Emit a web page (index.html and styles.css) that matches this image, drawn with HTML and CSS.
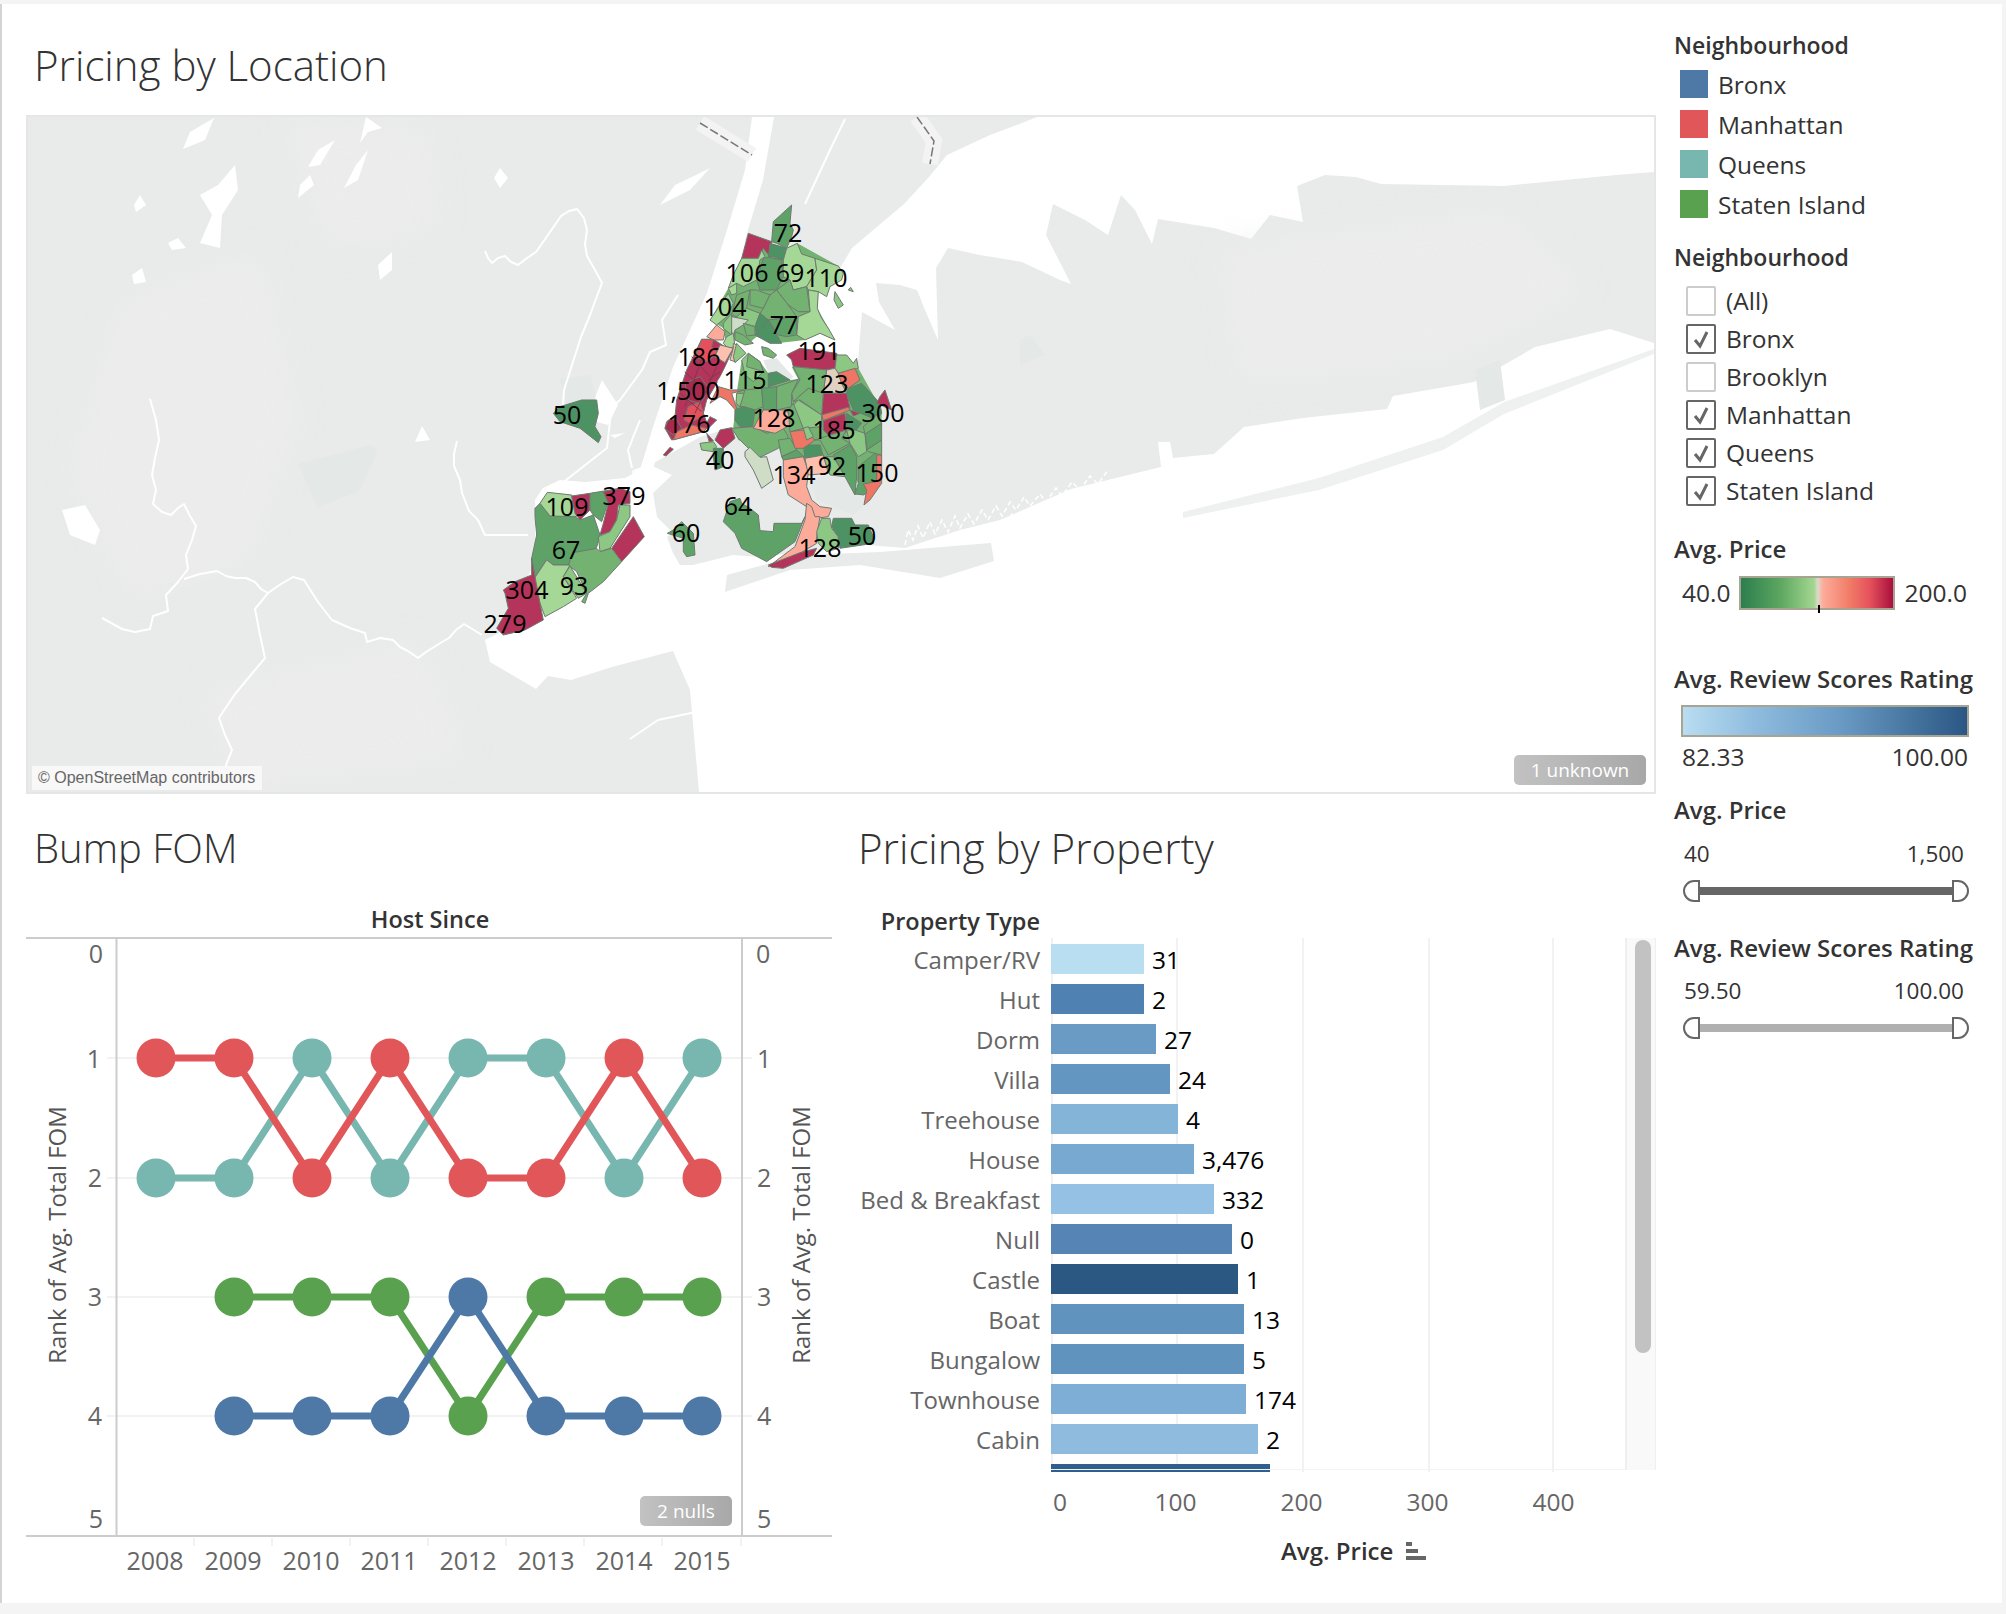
FILE: index.html
```html
<!DOCTYPE html>
<html lang="en">
<head>
<meta charset="utf-8">
<title>Pricing dashboard</title>
<link rel="stylesheet" href="styles.css">
</head>
<body>
<div class="dash">
  <main class="main">
    <h1 class="title title-top">Pricing by Location</h1>
    <section class="map">
      <svg class="map-svg" viewBox="28 117 1626 675" width="1626" height="675">
        <g class="land">
          <polygon points="28,117 752,117 745,170 727,230 707,293 673,367 653,427 640,470 625,478 585,482 560,480 543,488 535,500 535,560 505,630 485,640 490,662 536,689 548,676 571,680 612,667 673,651 690,690 699,792 28,792"/>
          <polygon points="774,117 1037,117 1022,123 990,135 947,155 929,177 904,204 852,248 827,290 780,300 745,240 763,180"/>
          <polygon points="858,362 862,312 895,330 879,302 876,283 900,285 917,290 925,310 938,340 936,268 948,248 980,255 1022,262 1060,280 1071,284 1046,235 1053,204 1085,220 1108,235 1121,195 1135,210 1152,244 1158,219 1214,228 1251,239 1270,215 1303,222 1297,186 1325,175 1356,177 1381,184 1504,186 1616,175 1654,172 1654,343 1610,329 1535,347 1474,382 1393,396 1387,409 1303,418 1244,427 1214,454 1173,458 1170,442 1158,442 1161,467 1071,489 1000,520 960,530 905,548 867,545 820,550 760,557 733,555 693,565 680,565 673,553 667,537 673,533 657,517 653,493 672,475 650,465 700,437 733,427 736,410 742,387 763,380 790,380 800,378 793,367 837,360"/>
          <polygon points="725,592 727,575 800,555 880,552 991,543 994,561 940,578 860,565 790,570"/>
        </g>
        <g class="tone">
          <polygon points="120,300 260,250 300,420 250,560 130,600 70,470"/>
          <polygon points="280,120 430,130 440,230 330,250"/>
          <polygon points="200,690 420,640 470,760 240,788"/>
          <polygon points="1220,250 1500,210 1590,290 1450,360 1240,385"/>
        </g>
        <polygon class="barrier" points="1183,512 1319,478 1443,437 1504,402 1654,349 1654,354 1504,414 1443,450 1319,490 1183,518"/>
        <g class="park">
          <polygon points="298,464 370,445 378,450 360,490 318,508"/>
          <polygon points="1020,340 1030,335 1045,355 1020,365"/>
          <polygon points="1475,370 1500,360 1505,400 1480,410"/>
          <polygon points="560,380 590,375 600,410 570,420"/>
          <polygon points="610,540 650,535 700,590 690,600 650,575 625,580" transform="translate(560 180) scale(.3333)"/>
          <polygon points="450,360 480,350 555,350 585,405 612,410 610,435 580,465 520,440 470,420" transform="translate(660 360) scale(.3333)"/>
        </g>
        <g class="river">
          <polyline points="485,251 488,258 492,263 498,258 505,256 511,262 518,265 527,258 536,252 548,235 561,216 569,211 577,209 584,218 587,230 585,244 587,256 595,270 602,283 597,296 590,315 581,337 572,365 564,390 563,405"/>
          <polyline points="150,399 156,420 159,440 155,458 152,475 156,490 153,504 162,512 171,515 178,508 184,504 190,516 196,526 192,540 186,555 188,569 178,582 166,595 168,611 153,616 150,629 135,632 122,629 102,618"/>
          <polyline points="184,579 200,574 217,571 226,576 235,578 246,578 255,582 261,589 268,593 281,584 293,577 304,580 318,602 332,620 350,628 365,633 367,642 380,638 393,640 400,647 408,651 418,658 426,652 434,647 442,642 449,638 456,630 464,624 482,635"/>
          <polyline points="268,593 255,609 260,635 265,658 250,676 235,694 219,718 225,735 232,750 224,770"/>
          <polyline points="457,441 454,454 454,466 460,480 462,493 469,511 478,520 485,535 505,535 528,535"/>
          <polyline points="630,739 658,720 696,712"/>
          <polyline points="845,119 830,150 805,204"/>
          <polyline points="678,295 662,320 666,345 650,352 642,370 620,400 607,412"/>
          <polyline points="612,403 607,448 561,484"/>
          <polyline points="640,420 628,450 632,468"/>
        </g>
        <g class="river-thin">
          <polyline points="700,123 752,155"/>
          <polyline points="917,117 934,141 930,164"/>
        </g>
        <g class="border-line">
          <polyline points="700,123 752,155"/>
          <polyline points="917,117 934,141 930,164"/>
        </g>
        <g class="lake">
          <polygon points="214,118 205,140 183,149 190,132"/>
          <polygon points="335,140 320,165 308,167 318,150"/>
          <polygon points="366,117 382,128 368,132 360,143"/>
          <polygon points="368,150 358,180 344,188 356,165"/>
          <polygon points="235,165 238,190 222,215 220,248 200,243 212,215 200,195 218,185"/>
          <polygon points="310,175 300,185 298,198 314,185"/>
          <polygon points="140,195 146,205 136,212 134,205"/>
          <polygon points="178,238 186,248 172,250 168,243"/>
          <polygon points="142,268 146,282 134,284 132,275"/>
          <polygon points="392,252 392,270 380,280 378,265"/>
          <polygon points="500,168 508,178 500,188 494,178"/>
          <polygon points="422,426 430,440 415,442"/>
          <polygon points="62,510 85,505 100,530 95,545 70,535"/>
          <polygon points="696,175 710,168 690,190 660,205 675,185"/>
          <polygon points="596,395 602,380 618,405 608,425 590,420"/>
          <polygon points="610,435 625,433 615,438"/>
          <polygon points="633,470 655,462 648,492 640,478"/>
          <polygon points="645,480 635,495 632,470"/>
        </g>
        <polyline class="marsh" points="905,545 908,530 913,540 918,526 923,538 930,522 935,534 942,520 948,532 955,516 960,528 968,514 974,524 982,510 988,520 996,506 1002,516 1010,502 1016,510 1024,497 1030,506 1040,494 1046,502 1056,488 1062,496 1072,482 1080,490 1090,476 1098,484 1108,470"/>
        <polyline class="marsh" points="1005,524 1012,514 1020,522 1030,510 1038,518 1048,506 1056,512 1068,500 1076,506 1090,494 1100,498 1115,484 1125,488 1140,476 1155,474"/>

        <g class="z" transform="translate(560 180) scale(.3333)">
          <polygon class="bk" points="545,235 630,190 680,205 712,190 835,258 845,300 775,335 772,385 825,480 780,460 735,480 650,490 590,470 560,495 525,480 500,505 490,445 450,420 505,325"/>
          <polygon class="bk" points="545,540 600,545 625,580 690,600 715,598 695,560 800,570 895,565 965,690 965,870 950,890 910,945 885,890 840,880 740,880 670,840 655,800 600,830 560,790 535,780 520,745 525,690 530,640"/>
          <polygon class="f-m2" points="640,125 695,75 690,130 700,150 695,170 680,205 650,190 635,185"/>
          <polygon class="f-cr" points="565,160 635,185 630,230 610,205 595,235 545,235"/>
          <polygon class="f-d" points="630,190 680,205 670,240 640,230 625,232"/>
          <polygon class="f-lg" points="670,240 680,205 712,190 725,222 765,235 770,270 740,320 700,330 690,300 670,290"/>
          <polygon class="f-lg" points="765,235 835,258 850,280 845,300 810,320 800,350 775,335 745,330 740,320 770,270"/>
          <polygon class="f-l2" points="825,335 850,375 835,385 822,360"/>
          <polygon class="f-l2" points="865,330 880,335 872,322"/>
          <polygon class="f-lg" points="775,335 772,385 785,415 805,445 825,480 780,460 735,480 710,465 715,410 750,395 745,330"/>
          <polygon class="f-lg" points="545,235 595,235 605,210 615,230 600,240 590,300 550,320 530,310 505,325 520,285"/>
          <polygon class="f-m2" points="625,232 665,240 670,290 650,330 600,330 590,300 610,235"/>
          <polygon class="f-m" points="650,330 690,300 700,330 740,320 750,395 715,395 685,375 665,350"/>
          <polygon class="f-m" points="590,330 630,345 610,385 570,375 570,330"/>
          <polygon class="f-m" points="610,385 630,345 650,330 665,350 685,375 710,410 625,420 600,400"/>
          <polygon class="f-l2" points="560,385 600,400 585,440 550,430 530,410"/>
          <polygon class="f-d" points="585,465 625,420 665,490 630,490"/>
          <polygon class="f-m2" points="625,420 710,410 710,465 680,470 655,465"/>
          <polygon class="f-d" points="585,440 600,400 625,420 590,462"/>
          <polygon class="f-pg" points="515,410 565,420 550,435 525,450 520,470 510,440"/>
          <polygon class="f-l2" points="490,430 515,400 515,465 490,445"/>
          <polygon class="f-lg" points="450,420 505,340 520,370 500,410 470,435"/>
          <polygon class="f-lg" points="505,325 530,310 530,340 515,345"/>
          <polygon class="f-m" points="530,345 570,330 560,385 530,410 515,405"/>
          <polygon class="f-m" points="525,455 550,465 580,490 555,495 525,480"/>
          <polygon class="f-lg" points="500,470 520,460 525,500 505,505 490,490"/>
          <polygon class="f-m" points="550,430 585,440 585,465 560,468"/>
          <polygon class="f-cr" points="425,478 460,478 495,500 520,505 495,560 470,610 440,660 430,700 445,740 430,755 335,780 315,745 320,725 345,710 350,660 380,570"/>
          <polygon class="f-sa" points="445,465 470,435 495,455 490,480 460,480 440,470"/>
          <polygon class="f-rd" points="425,478 460,478 455,500 475,520 440,545 405,530"/>
          <polygon class="f-pk" points="480,495 520,505 495,548 465,530"/>
          <polygon class="f-dk" points="375,610 420,590 450,630 420,670 385,660"/>
          <polygon class="f-rd" points="385,680 420,665 432,705 390,730 372,720"/>
          <polygon class="f-co" points="350,755 395,735 440,745 430,755 340,780"/>
          <polygon class="f-dk" points="315,745 325,720 350,718 365,745 340,765"/>
          <polyline class="street" points="395,530 450,590"/>
          <polyline class="street" points="375,575 440,640"/>
          <polyline class="street" points="360,640 425,695"/>
          <polyline class="street" points="425,535 375,680"/>
          <polyline class="street" points="470,560 405,700"/>
          <polyline class="street" points="445,600 480,575"/>
          <polygon class="f-pk" points="520,505 520,490 530,495 555,520 525,545 510,540"/>
          <polygon class="f-l2" points="520,530 530,490 558,520 525,548"/>
          <polygon class="f-m" points="605,500 625,505 650,525 640,535 610,525"/>
          <polygon class="f-cr" points="680,525 720,505 830,520 838,540 825,565 800,570 700,560 695,540"/>
          <polygon class="f-l2" points="830,525 860,525 880,550 890,535 895,565 835,580 825,565"/>
          <polygon class="f-tn" points="800,570 825,565 835,580 845,610 860,640 790,640 795,600"/>
          <polygon class="f-co" points="835,580 885,565 900,600 865,625 845,610"/>
          <polygon class="f-d" points="865,625 905,610 960,670 965,700 950,720 880,690 860,640"/>
          <polygon class="f-cr" points="860,640 870,685 785,705 790,640"/>
          <polygon class="f-cr" points="975,630 995,690 950,670 960,650"/>
          <polygon class="f-co" points="785,705 865,682 870,690 790,722"/>
          <polygon class="f-cr" points="790,722 855,700 860,755 840,770 810,770 790,750"/>
          <polygon class="f-cr" points="870,690 900,700 880,708"/>
          <polygon class="f-d" points="860,700 905,730 880,760 860,740"/>
          <polygon class="f-m" points="700,560 800,570 795,600 790,640 745,625 700,665 695,640 720,600"/>
          <polygon class="f-l2" points="545,540 565,520 600,545 610,575 580,605 555,585"/>
          <polygon class="f-m" points="565,520 600,545 610,575 560,560"/>
          <polygon class="f-d" points="625,580 650,575 690,600 625,620"/>
          <polygon class="f-co" points="450,670 475,620 510,630 555,630 515,640 535,700 500,660 480,650"/>
          <polygon class="f-l2" points="530,640 555,640 540,680 528,670"/>
          <polygon class="f-m" points="555,630 605,625 610,680 585,690 550,680 540,680"/>
          <polygon class="f-m2" points="605,625 650,620 650,690 610,690"/>
          <polygon class="f-m" points="650,620 715,598 695,640 695,680 650,690"/>
          <polygon class="f-m" points="700,665 745,625 790,640 785,705 720,660"/>
          <polygon class="f-l2" points="695,680 715,660 785,705 785,740 730,745 690,700"/>
          <polygon class="f-d" points="525,690 550,680 585,690 578,740 540,740 525,720"/>
        </g>
        <polygon class="z f-d" points="0,680 65,660 110,660 115,700 105,740 123,770 115,788 60,745 0,725 -20,700" transform="translate(560 180) scale(.3333)"/>

        <g class="z" transform="translate(660 360) scale(.3333)">
          <polygon class="f-cr" points="150,170 170,180 145,205 140,190"/>
          <polygon class="f-cr" points="10,285 30,262 40,268 18,288"/>
          <polygon class="f-cr" points="180,210 215,203 225,235 190,265 165,240"/>
          <polygon class="f-cr" points="140,220 160,242 148,246"/>
          <polygon class="f-l2" points="120,250 160,245 170,260 160,275 125,270"/>
          <polygon class="f-d" points="160,265 190,265 190,320 165,330 160,290"/>
          <polygon class="f-m" points="215,205 280,200 320,220 370,205 385,230 355,265 300,292 260,260 235,235"/>
          <polygon class="f-sa" points="280,205 310,150 380,150 400,190 345,220"/>
          <polygon class="f-pg" points="255,275 270,262 300,292 320,290 340,360 305,385 280,330 255,290"/>
          <polygon class="f-m" points="355,240 390,235 410,270 365,290"/>
          <polygon class="f-m2" points="365,290 410,270 432,290 370,300"/>
          <polygon class="f-d" points="430,255 480,255 490,290 435,295"/>
          <polygon class="f-co" points="390,215 430,210 465,240 430,265 405,265"/>
          <polygon class="f-l2" points="430,205 445,200 460,230 440,240"/>
          <polygon class="f-m" points="385,150 400,130 430,205 390,215"/>
          <polygon class="f-sa" points="370,300 430,290 445,335 440,380 455,420 480,440 515,445 505,470 470,475 440,440 385,405 370,350"/>
          <polygon class="f-pk" points="435,295 490,285 505,340 445,345"/>
          <polygon class="f-l2" points="490,290 520,290 555,350 510,345 503,325"/>
          <polygon class="f-m" points="480,240 505,285 570,250 545,235 560,210 510,225 465,240"/>
          <polygon class="f-l2" points="570,250 595,290 620,275 615,220 585,210 560,210"/>
          <polygon class="f-m2" points="520,285 570,255 590,290 590,350 585,405 555,350"/>
          <polygon class="f-m2" points="595,320 655,272 660,290 650,365 612,405 585,402 595,370"/>
          <polygon class="f-co" points="650,285 665,285 665,370 630,420 612,435 620,390 610,372 650,365"/>
          <polygon class="f-m" points="620,270 665,240 665,285 625,275"/>
          <polygon class="f-m2" points="615,220 665,190 665,240 622,268"/>
          <polygon class="f-m" points="610,200 650,165 665,190 615,222"/>
          <polygon class="f-m2" points="190,485 210,425 240,415 245,430 270,445 295,465 300,512 340,515 342,490 425,490 435,470 405,545 320,605 245,565 225,520"/>
          <polygon class="f-sa" points="325,620 405,560 435,480 440,430 455,440 465,470 480,470 470,530 470,550 420,580 400,590"/>
          <polygon class="f-cr" points="325,615 420,578 470,565 460,585 370,625 335,622"/>
          <polygon class="f-l2" points="470,515 485,475 510,475 515,505 535,530 535,565 500,575 475,550"/>
          <polygon class="f-d" points="520,475 575,475 585,495 625,495 640,530 640,550 540,565 535,530 515,500"/>
          <polygon class="f-m2" points="22,520 40,510 65,485 100,520 105,585 80,590 70,575 70,535"/>
        </g>

        <g class="z" transform="translate(460 460) scale(.3333)">
          <polygon class="f-m2" points="225,145 240,130 270,168 345,170 360,180 400,165 420,225 410,262 380,278 340,275 325,315 280,315 260,298 225,350 215,295 230,225 225,170"/>
          <polygon class="f-lg" points="240,130 262,97 335,105 340,125 360,165 345,170 270,168"/>
          <polygon class="f-cr" points="335,108 390,100 390,150 360,180 345,160"/>
          <polygon class="f-m2" points="390,100 480,85 510,100 475,130 445,125 425,185 400,165 390,150"/>
          <polygon class="f-cr" points="430,95 480,85 510,95 510,130 475,135 470,180 450,215 420,225 430,190 445,130"/>
          <polygon class="f-l2" points="470,180 480,135 510,135 510,170 450,265 420,275 415,230 450,215"/>
          <polygon class="f-cr" points="520,170 553,230 485,305 455,265"/>
          <polygon class="f-m" points="340,278 410,265 420,275 455,265 485,305 430,365 385,400 375,430 365,425 380,400 350,335 325,315"/>
          <polygon class="f-lg" points="260,300 280,315 330,315 310,350 350,415 310,440 255,470 240,430 220,360"/>
          <polygon class="f-l2" points="330,318 380,400 355,415 310,350"/>
          <polygon class="f-cr" points="215,295 225,350 240,430 250,480 195,510 130,525 110,505 145,445 135,400 130,390 165,365 215,345"/>
        </g>
        <polyline class="bridge" points="718,382 726,371"/>
        <polyline class="bridge" points="721,384 729,373"/>

        <g class="map-label">
          <text x="788" y="242">72</text><text x="747" y="282">106</text><text x="790" y="282">69</text>
          <text x="826" y="287">110</text><text x="725" y="316">104</text><text x="784" y="334">77</text>
          <text x="699" y="366">186</text><text x="819" y="360">191</text><text x="745" y="389">115</text>
          <text x="827" y="393">123</text><text x="688" y="400">1,500</text><text x="774" y="427">128</text>
          <text x="883" y="422">300</text><text x="689" y="433">176</text><text x="834" y="439">185</text>
          <text x="720" y="469">40</text><text x="567" y="424">50</text><text x="794" y="484">134</text>
          <text x="832" y="475">92</text><text x="877" y="482">150</text><text x="738" y="515">64</text>
          <text x="686" y="542">60</text><text x="820" y="557">128</text><text x="862" y="545">50</text>
          <text x="567" y="516">109</text><text x="624" y="505">379</text><text x="566" y="559">67</text>
          <text x="574" y="595">93</text><text x="527" y="599">304</text><text x="505" y="633">279</text>
        </g>
      </svg>
      <div class="osm">© OpenStreetMap contributors</div>
      <div class="pill pill-unknown">1 unknown</div>
    </section>

    <div class="bottom">
      <section class="bump">
        <h2 class="title title-low title-bump">Bump FOM</h2>
        <svg class="bump-svg" viewBox="26 900 806 680" width="806" height="680">
          <text class="axis-head" x="430" y="928">Host Since</text>
          <g class="grid">
            <line x1="107" y1="1058" x2="752" y2="1058"/><line x1="107" y1="1178" x2="752" y2="1178"/>
            <line x1="107" y1="1297" x2="752" y2="1297"/><line x1="107" y1="1416" x2="752" y2="1416"/>
            <line x1="194" y1="1538" x2="194" y2="1546"/><line x1="272" y1="1538" x2="272" y2="1546"/>
            <line x1="350" y1="1538" x2="350" y2="1546"/><line x1="428" y1="1538" x2="428" y2="1546"/>
            <line x1="506" y1="1538" x2="506" y2="1546"/><line x1="584" y1="1538" x2="584" y2="1546"/>
            <line x1="662" y1="1538" x2="662" y2="1546"/><line x1="741" y1="1538" x2="741" y2="1546"/>
          </g>
          <g class="axis">
            <line x1="26" y1="938" x2="832" y2="938"/><line x1="26" y1="1536" x2="832" y2="1536"/>
            <line x1="116.500" y1="938" x2="116.500" y2="1536"/><line x1="742" y1="938" x2="742" y2="1536"/>
          </g>
          <polyline class="series s-green" points="234,1297 312,1297 390,1297 468,1416 546,1297 624,1297 702,1297"/>
          <polyline class="series s-blue" points="234,1416 312,1416 390,1416 468,1297 546,1416 624,1416 702,1416"/>
          <polyline class="series s-teal" points="156,1178 234,1178 312,1058 390,1178 468,1058 546,1058 624,1178 702,1058"/>
          <polyline class="series s-red" points="156,1058 234,1058 312,1178 390,1058 468,1178 546,1178 624,1058 702,1178"/>
          <g class="dots d-red">
            <circle cx="156" cy="1058" r="19.500"/><circle cx="234" cy="1058" r="19.500"/><circle cx="312" cy="1178" r="19.500"/><circle cx="390" cy="1058" r="19.500"/>
            <circle cx="468" cy="1178" r="19.500"/><circle cx="546" cy="1178" r="19.500"/><circle cx="624" cy="1058" r="19.500"/><circle cx="702" cy="1178" r="19.500"/>
          </g>
          <g class="dots d-teal">
            <circle cx="156" cy="1178" r="19.500"/><circle cx="234" cy="1178" r="19.500"/><circle cx="312" cy="1058" r="19.500"/><circle cx="390" cy="1178" r="19.500"/>
            <circle cx="468" cy="1058" r="19.500"/><circle cx="546" cy="1058" r="19.500"/><circle cx="624" cy="1178" r="19.500"/><circle cx="702" cy="1058" r="19.500"/>
          </g>
          <g class="dots d-green">
            <circle cx="234" cy="1297" r="19.500"/><circle cx="312" cy="1297" r="19.500"/><circle cx="390" cy="1297" r="19.500"/><circle cx="468" cy="1416" r="19.500"/>
            <circle cx="546" cy="1297" r="19.500"/><circle cx="624" cy="1297" r="19.500"/><circle cx="702" cy="1297" r="19.500"/>
          </g>
          <g class="dots d-blue">
            <circle cx="234" cy="1416" r="19.500"/><circle cx="312" cy="1416" r="19.500"/><circle cx="390" cy="1416" r="19.500"/><circle cx="468" cy="1297" r="19.500"/>
            <circle cx="546" cy="1416" r="19.500"/><circle cx="624" cy="1416" r="19.500"/><circle cx="702" cy="1416" r="19.500"/>
          </g>
          <g class="tick-l">
            <text x="103" y="963">0</text><text x="101" y="1068">1</text><text x="102" y="1187">2</text>
            <text x="102" y="1306">3</text><text x="102" y="1425">4</text><text x="103" y="1528">5</text>
          </g>
          <g class="tick-r">
            <text x="756" y="963">0</text><text x="757" y="1068">1</text><text x="757" y="1187">2</text>
            <text x="757" y="1306">3</text><text x="757" y="1425">4</text><text x="757" y="1528">5</text>
          </g>
          <g class="tick-x">
            <text x="155" y="1570">2008</text><text x="233" y="1570">2009</text><text x="311" y="1570">2010</text><text x="389" y="1570">2011</text>
            <text x="468" y="1570">2012</text><text x="546" y="1570">2013</text><text x="624" y="1570">2014</text><text x="702" y="1570">2015</text>
          </g>
          <text class="y-title" transform="translate(66 1235) rotate(-90)">Rank of Avg. Total FOM</text>
          <text class="y-title" transform="translate(810 1235) rotate(-90)">Rank of Avg. Total FOM</text>
          <rect class="pill-rect" x="640" y="1496" width="92" height="30" rx="5"/>
          <text class="pill-text" x="686" y="1518">2 nulls</text>
          <defs>
            <linearGradient id="pillGrad" x1="0" x2="1" y1="0" y2="0">
              <stop offset="0" stop-color="#c2c2c2"/><stop offset="1" stop-color="#a8a8a8"/>
            </linearGradient>
          </defs>
        </svg>
      </section>

      <section class="prop">
        <h2 class="title title-low">Pricing by Property</h2>
        <div class="prop-head">Property Type</div>
        <div class="prop-body">
          <div class="scroller">
            <div class="gridline" style="left:193px"></div>
            <div class="gridline" style="left:318px"></div>
            <div class="gridline" style="left:444px"></div>
            <div class="gridline" style="left:570px"></div>
            <div class="gridline" style="left:694px"></div>
            <div class="rows">
              <div class="row"><span class="r-label">Camper/RV</span><span class="bar" style="width:93px;background:#b9ddf1"></span><span class="r-val">31</span></div>
              <div class="row"><span class="r-label">Hut</span><span class="bar" style="width:93px;background:#4f81b3"></span><span class="r-val">2</span></div>
              <div class="row"><span class="r-label">Dorm</span><span class="bar" style="width:105px;background:#6a9bc5"></span><span class="r-val">27</span></div>
              <div class="row"><span class="r-label">Villa</span><span class="bar" style="width:119px;background:#6496c2"></span><span class="r-val">24</span></div>
              <div class="row"><span class="r-label">Treehouse</span><span class="bar" style="width:127px;background:#85b4d9"></span><span class="r-val">4</span></div>
              <div class="row"><span class="r-label">House</span><span class="bar" style="width:143px;background:#78a9d1"></span><span class="r-val">3,476</span></div>
              <div class="row"><span class="r-label">Bed &amp; Breakfast</span><span class="bar" style="width:163px;background:#94c1e4"></span><span class="r-val">332</span></div>
              <div class="row"><span class="r-label">Null</span><span class="bar" style="width:181px;background:#5584b5"></span><span class="r-val">0</span></div>
              <div class="row"><span class="r-label">Castle</span><span class="bar" style="width:187px;background:#2b5783"></span><span class="r-val">1</span></div>
              <div class="row"><span class="r-label">Boat</span><span class="bar" style="width:193px;background:#6093bd"></span><span class="r-val">13</span></div>
              <div class="row"><span class="r-label">Bungalow</span><span class="bar" style="width:193px;background:#6093bd"></span><span class="r-val">5</span></div>
              <div class="row"><span class="r-label">Townhouse</span><span class="bar" style="width:195px;background:#7eaed5"></span><span class="r-val">174</span></div>
              <div class="row"><span class="r-label">Cabin</span><span class="bar" style="width:207px;background:#8fbcde"></span><span class="r-val">2</span></div>
              <div class="row"><span class="r-label">Tent</span><span class="bar" style="width:219px;background:#2f5f8d"></span><span class="r-val">5</span></div>
            </div>
            <div class="clip-line"></div>
          </div>
          <div class="track"><div class="thumb"></div></div>
        </div>
        <div class="x-ticks">
          <span class="x-cell x-first">0</span><span class="x-cell">100</span><span class="x-cell">200</span><span class="x-cell">300</span><span class="x-cell">400</span>
        </div>
        <div class="x-title">Avg. Price
          <svg class="sort" width="20" height="20" viewBox="0 0 20 20"><rect x="0" y="0" width="6" height="4"/><rect x="0" y="7" width="12" height="4"/><rect x="0" y="14" width="20" height="4"/></svg>
        </div>
      </section>
    </div>
  </main>

  <aside class="side">
    <h3 class="s-title s-hood">Neighbourhood</h3>
    <ul class="swatches">
      <li class="swatch-row"><span class="swatch sw-blue"></span>Bronx</li>
      <li class="swatch-row"><span class="swatch sw-red"></span>Manhattan</li>
      <li class="swatch-row"><span class="swatch sw-teal"></span>Queens</li>
      <li class="swatch-row"><span class="swatch sw-green"></span>Staten Island</li>
    </ul>
    <h3 class="s-title s-hood s-filter">Neighbourhood</h3>
    <ul class="checks">
      <li class="check-row"><span class="box"></span>(All)</li>
      <li class="check-row"><span class="box on"><svg width="26" height="26" viewBox="0 0 26 26"><polyline points="7,14 12,20 19,6"/></svg></span>Bronx</li>
      <li class="check-row"><span class="box"></span>Brooklyn</li>
      <li class="check-row"><span class="box on"><svg width="26" height="26" viewBox="0 0 26 26"><polyline points="7,14 12,20 19,6"/></svg></span>Manhattan</li>
      <li class="check-row"><span class="box on"><svg width="26" height="26" viewBox="0 0 26 26"><polyline points="7,14 12,20 19,6"/></svg></span>Queens</li>
      <li class="check-row"><span class="box on"><svg width="26" height="26" viewBox="0 0 26 26"><polyline points="7,14 12,20 19,6"/></svg></span>Staten Island</li>
    </ul>
    <h3 class="s-title s-price">Avg. Price</h3>
    <div class="ramp-row">
      <span class="ramp-val">40.0</span>
      <span class="ramp ramp-price"><i class="ramp-tick"></i></span>
      <span class="ramp-val">200.0</span>
    </div>
    <h3 class="s-title s-review">Avg. Review Scores Rating</h3>
    <div class="ramp ramp-review"></div>
    <div class="ends ends-ramp"><span>82.33</span><span>100.00</span></div>
    <h3 class="s-title s-sl1">Avg. Price</h3>
    <div class="ends ends-slider"><span>40</span><span>1,500</span></div>
    <div class="slider"><i class="hd hd-l"></i><i class="rail rail-dark"></i><i class="hd hd-r"></i></div>
    <h3 class="s-title s-sl2">Avg. Review Scores Rating</h3>
    <div class="ends ends-slider ends-s2"><span>59.50</span><span>100.00</span></div>
    <div class="slider"><i class="hd hd-l"></i><i class="rail rail-light"></i><i class="hd hd-r"></i></div>
  </aside>
</div>
</body>
</html>
```
FILE: styles.css
```css
* { box-sizing: border-box; }
html, body { margin: 0; padding: 0; }
body { font-family: "Open Sans", "Liberation Sans", sans-serif; color: #333; background: #f4f4f4; }
h1, h2, h3, ul { margin: 0; padding: 0; list-style: none; }
i { display: block; }

.dash {
  width: 2006px; height: 1614px; padding: 4px 4px 11px 0;
  display: flex; background: #f4f4f4;
}
.main {
  width: 1656px; height: 100%; padding-left: 24px; background: #fff;
  border-left: 2px solid #d4d4d4; flex: none;
}
.side { flex: 1; background: #fff; padding: 26px 0 0 18px; }

.title { font-weight: 300; font-size: 42px; line-height: 50px; color: #333; white-space: nowrap; }
.title-top { height: 111px; padding: 36px 0 0 8px; }
.title-low { height: 49px; margin-top: 29px; }
.title-bump { font-size: 40px; padding-left: 8px; }

/* map */
.map { position: relative; width: 1630px; height: 679px; border: 2px solid #e6e6e6; background: #fff; overflow: hidden; }
.map-svg { display: block; }
.land polygon { fill: #e9eaea; }
.tone { filter: blur(16px); }
.tone polygon { fill: #ececec; }
.barrier { fill: #eef1f0; }
.park polygon { fill: #e4e8e7; }
.river polyline { fill: none; stroke: #fff; stroke-width: 2; stroke-linejoin: round; }
.river-thin polyline { fill: none; stroke: #f3f3f3; stroke-width: 16; }
.border-line polyline { fill: none; stroke: #777; stroke-width: 1.500; stroke-dasharray: 9 3; }
.lake polygon { fill: #fff; }
.marsh { fill: none; stroke: #fff; stroke-width: 1.500; stroke-dasharray: 5 3; }
.z polygon, .z.f-d { stroke: #6e7a70; stroke-width: 1; vector-effect: non-scaling-stroke; stroke-linejoin: round; }
.z polygon.bk { fill: #74b272; stroke: none; }
.street { fill: none; stroke: #7a3a50; stroke-width: 1; vector-effect: non-scaling-stroke; }
.bridge { stroke: #fff; stroke-width: 2; fill: none; }
.f-cr { fill: #b5345b; }
.f-dk { fill: #a82a50; }
.f-rd { fill: #e5505c; }
.f-co { fill: #ef7565; }
.f-sa { fill: #fcab9a; }
.f-pk { fill: #fdc0ae; }
.f-tn { fill: #e2d0c0; }
.f-pg { fill: #cfdcc6; }
.f-lg { fill: #a5d796; }
.f-l2 { fill: #8cc783; }
.f-m { fill: #74b272; }
.f-m2 { fill: #5fa268; }
.f-d { fill: #4d9263; }
.map-label text { font-size: 25px; fill: #000; text-anchor: middle; }
.osm {
  position: absolute; left: 4px; bottom: 2px; height: 24px; width: 230px; padding-left: 6px;
  background: #f8f8f8; color: #666; font: 16px/24px "Liberation Sans", sans-serif;
}
.pill {
  position: absolute; background: linear-gradient(90deg, #c2c2c2, #a8a8a8);
  border-radius: 5px; color: #fff; text-align: center;
}
.pill-unknown { right: 8px; bottom: 7px; width: 132px; height: 30px; font-size: 19px; line-height: 30px; }

/* bottom */
.bottom { display: flex; gap: 26px; }
.bump { width: 806px; flex: none; }
.bump-svg { display: block; margin-top: 28px; }
.axis-head { font-size: 23.500px; font-weight: 600; fill: #333; text-anchor: middle; }
.grid line { stroke: #f2f2f2; stroke-width: 2; }
.axis line { stroke: #cccccc; stroke-width: 2; }
.series { fill: none; stroke-width: 7; }
.s-red { stroke: #e15759; }
.s-teal { stroke: #78b6b0; }
.s-green { stroke: #59a14f; }
.s-blue { stroke: #4e79a7; }
.d-red circle { fill: #e15759; }
.d-teal circle { fill: #78b6b0; }
.d-green circle { fill: #59a14f; }
.d-blue circle { fill: #4e79a7; }
.tick-l text { font-size: 25px; fill: #666; text-anchor: end; }
.tick-r text { font-size: 25px; fill: #666; }
.tick-x text { font-size: 25px; fill: #666; text-anchor: middle; }
.y-title { font-size: 24px; fill: #555; text-anchor: middle; }
.pill-rect { fill: url(#pillGrad); }
.pill-text { font-size: 19px; fill: #fff; text-anchor: middle; }

/* property bars */
.prop { width: 798px; flex: none; }
.prop-head {
  margin-top: 34px; width: 182px; height: 30px; text-align: right;
  font-size: 23.500px; line-height: 30px; font-weight: 600; color: #333; white-space: nowrap;
}
.prop-body { display: flex; height: 534px; margin-top: 2px; }
.scroller { position: relative; width: 767px; height: 534px; overflow: hidden; flex: none; }
.gridline { position: absolute; top: 0; bottom: 0; width: 2px; background: #f2f2f2; }
.rows { position: relative; padding-top: 6px; display: flex; flex-direction: column; gap: 10px; }
.row { display: flex; align-items: center; height: 30px; }
.r-label { width: 182px; margin-right: 11px; text-align: right; font-size: 24px; color: #666; white-space: nowrap; flex: none; }
.bar { height: 30px; flex: none; }
.r-val { margin-left: 8px; font-size: 24.500px; color: #000; }
.clip-line { position: absolute; left: 193px; right: 0; bottom: 2px; height: 1px; background: #f4f4f4; }
.track { width: 31px; height: 532px; background: #f9f9f9; border-left: 2px solid #efefef; border-right: 1px solid #efefef; padding: 2px 0 0 8px; }
.thumb { width: 16px; height: 413px; background: #c2c2c2; border-radius: 8px; }
.x-ticks { display: flex; height: 34px; margin-left: 193px; margin-top: 13px; }
.x-cell { width: 126px; flex: none; text-align: center; font-size: 24.500px; line-height: 34px; color: #666; transform: translateX(-64.500px); }
.x-first { transform: translateX(-54px); }
.x-title { display: flex; align-items: flex-start; gap: 13px; margin: 17px 0 0 423px; font-size: 24px; line-height: 30px; font-weight: 600; color: #333; }
.sort { margin-top: 6px; }
.sort rect { fill: #666; }

/* sidebar */
.s-title { font-size: 24px; font-weight: 600; line-height: 30px; height: 30px; color: #333; white-space: nowrap; }
.s-hood { font-size: 23px; }
.s-filter { margin-top: 24px; }
.s-price { margin-top: 28px; }
.s-review { margin-top: 54px; }
.s-sl1 { margin-top: 23px; }
.s-sl2 { margin-top: 31px; }
.swatches { margin-top: 10px; display: flex; flex-direction: column; gap: 12px; padding-left: 6px; }
.swatch-row { display: flex; align-items: center; height: 28px; font-size: 24.500px; color: #333; }
.swatch { width: 28px; height: 28px; margin-right: 10px; flex: none; }
.sw-blue { background: #4e79a7; }
.sw-red { background: #e15759; }
.sw-teal { background: #78b6b0; }
.sw-green { background: #59a14f; }
.checks { margin-top: 14px; display: flex; flex-direction: column; gap: 8px; padding-left: 12px; }
.check-row { display: flex; align-items: center; height: 30px; font-size: 24.500px; line-height: 28px; color: #333; }
.box { width: 30px; height: 30px; margin-right: 10px; border: 2px solid #ccc; border-radius: 2px; flex: none; }
.box.on { border-color: #666; }
.box svg { display: block; }
.box polyline { fill: none; stroke: #666; stroke-width: 3; }
.ramp-row { display: flex; align-items: center; height: 34px; margin-top: 12px; padding-left: 8px; }
.ramp-val { font-size: 24.500px; line-height: 34px; color: #333; }
.ramp { display: block; position: relative; border: 2px solid #a8a494; }
.ramp-price {
  width: 156px; height: 34px; margin: 0 9px;
  background: linear-gradient(90deg, #2c7e4f 0, #5aa55f 25%, #a3d690 48%, #dcd9c8 50.500%, #fdab9a 54%, #f07a66 72%, #e5505c 85%, #a90f3c 100%);
}
.ramp-tick { position: absolute; left: 77px; top: 27px; width: 2px; height: 8px; background: #000; }
.ramp-review {
  width: 288px; height: 32px; margin: 11px 0 0 7px;
  background: linear-gradient(90deg, #b9ddf1 0, #8fbcde 25%, #6a9bc5 55%, #2a5783 100%);
}
.ends { display: flex; justify-content: space-between; color: #333; }
.ends-ramp { width: 286px; margin: 5px 0 0 8px; font-size: 24.500px; line-height: 30px; }
.ends-slider { width: 280px; margin: 15px 0 0 10px; font-size: 22.500px; line-height: 28px; }
.ends-s2 { margin-top: 14px; }
.slider { display: flex; align-items: center; width: 286px; height: 22px; margin: 12px 0 0 9px; }
.hd { width: 17px; height: 22px; border: 2px solid #666; background: #fff; flex: none; }
.hd-l { border-radius: 11px 0 0 11px; }
.hd-r { border-radius: 0 11px 11px 0; }
.rail { flex: 1; height: 8px; }
.rail-dark { background: #666; }
.rail-light { background: #b0b0b0; }
```
